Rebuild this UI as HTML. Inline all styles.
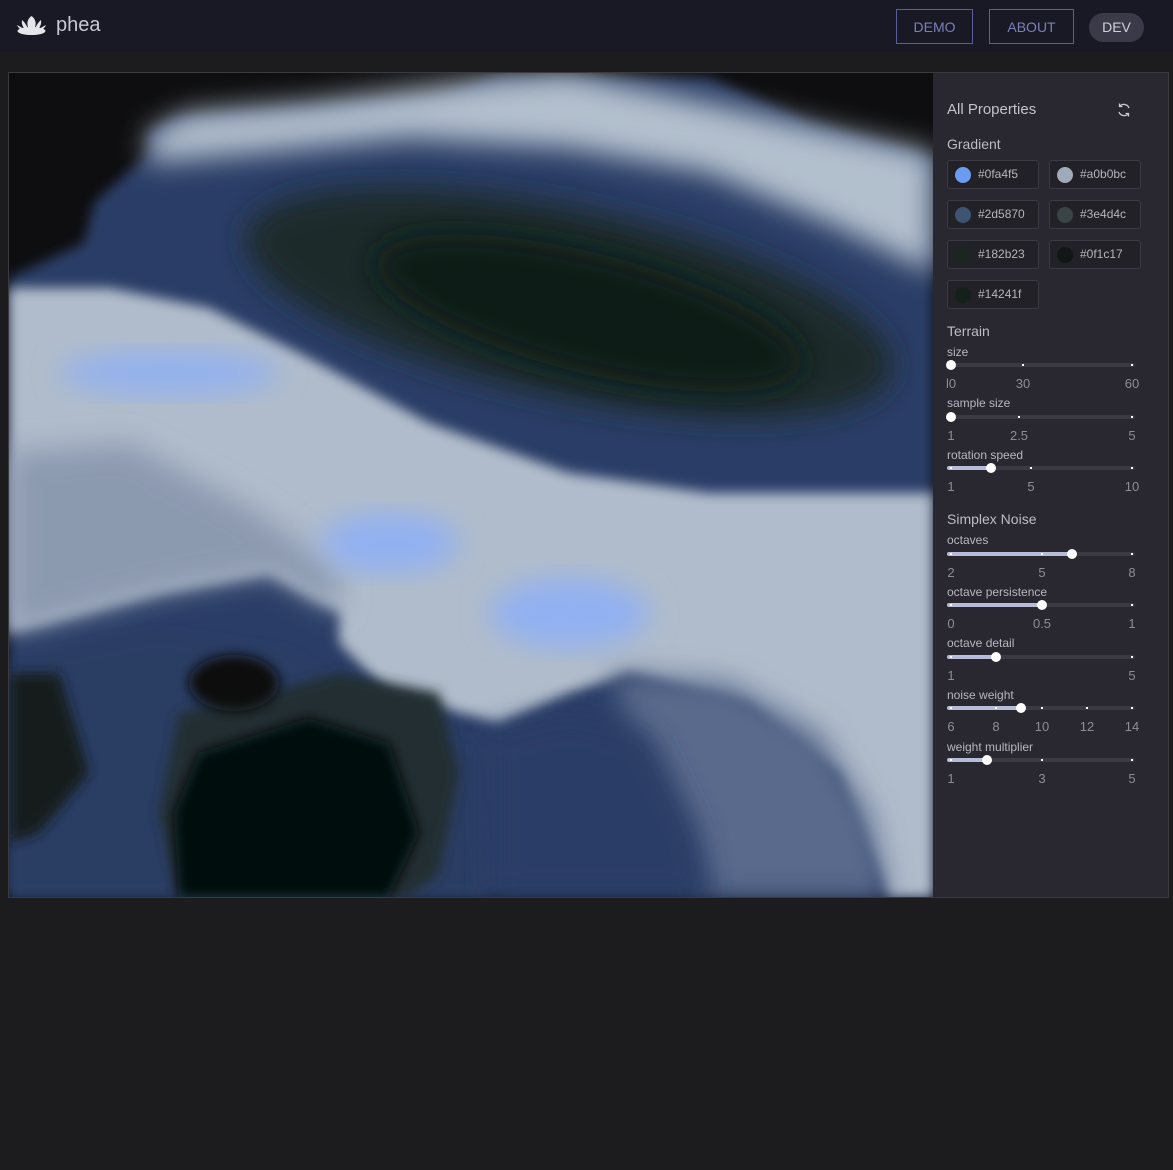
<!DOCTYPE html>
<html><head><meta charset="utf-8"><style>
*{margin:0;padding:0;box-sizing:border-box}
body{width:1173px;height:1170px;background:#1c1b1e;font-family:"Liberation Sans",sans-serif;position:relative;overflow:hidden}
.hdr{position:absolute;left:0;top:0;width:1173px;height:52px;background:#191926}
.logo{position:absolute;left:56px;top:14px;font-size:20px;color:#c8c8d4}
.btn{position:absolute;top:9px;height:35px;border:1px solid #5a5f99;color:#7a80b8;font-size:14px;line-height:35px;text-align:center}
.dev{position:absolute;left:1089px;top:13px;width:55px;height:29px;border-radius:15px;background:#3a3a48;color:#d0d0da;font-size:14px;line-height:29px;text-align:center}
.canvas{position:absolute;left:8px;top:72px;width:1161px;height:826px;border:1px solid #3a3a40;background:#0e0e10}
.panel{position:absolute;left:933px;top:73px;width:235px;height:824px;background:#29272f}
.t{position:absolute;color:#c4c2cc;font-size:15px}
.h{position:absolute;color:#bdbcc6;font-size:14px}
.sw{position:absolute;width:92px;height:29px;border:1px solid #3c3a44;border-radius:3px;background:#222127;color:#b5b4bd;font-size:12px;line-height:27px;padding-left:30px}
.sw i{position:absolute;left:7px;top:6px;width:16px;height:16px;border-radius:50%}
.lb{position:absolute;left:947px;color:#b8b7c0;font-size:12px}
.tr{position:absolute;left:947px;width:188px;height:4px;background:#3b3a42;border-radius:2px}
.fill{position:absolute;left:0;top:0;height:4px;background:#b8bcd8;border-radius:2px}
.tk{position:absolute;top:1px;width:2px;height:2px;background:#fff}
.th{position:absolute;top:-3px;width:10px;height:10px;border-radius:50%;background:#fff;margin-left:-5px}
.nm{position:absolute;color:#8e8d96;font-size:13px;transform:translateX(-50%)}
</style></head><body>
<div class="hdr">
<svg style="position:absolute;left:16px;top:14px" width="31" height="22" viewBox="0 0 31 22"><g fill="#e6e6ea"><ellipse cx="15.5" cy="17" rx="14" ry="4"/><path d="M15.5 2 C10 6 10 13 15.5 18 C21 13 21 6 15.5 2Z"/><path d="M6 6 C5 12 9 17 15 18 C11 14 10 9 6 6Z"/><path d="M25 6 C26 12 22 17 16 18 C20 14 21 9 25 6Z"/><path d="M1 11 C3 16 9 18 14 18 C9 16 5 13 1 11Z"/><path d="M30 11 C28 16 22 18 17 18 C22 16 26 13 30 11Z"/></g></svg>
<div class="logo">phea</div>
<div class="btn" style="left:896px;width:77px">DEMO</div>
<div class="btn" style="left:989px;width:85px">ABOUT</div>
<div class="dev">DEV</div>
</div>
<div class="canvas"></div>
<svg style="position:absolute;left:9px;top:73px" width="924" height="824" viewBox="0 0 924 824">
<defs>
<filter id="b" x="-20%" y="-20%" width="140%" height="140%"><feGaussianBlur stdDeviation="14"/></filter>
<filter id="b2" x="-20%" y="-20%" width="140%" height="140%"><feGaussianBlur stdDeviation="6"/></filter>
<clipPath id="c"><rect width="924" height="824"/></clipPath>
</defs>
<rect width="924" height="824" fill="#0e0e10"/>
<g clip-path="url(#c)">
<path d="M0 205 L75 170 L85 130 L140 80 L140 60 L170 45 L300 35 L430 25 L490 5 L700 5 L800 50 L924 85 L924 824 L0 824Z" fill="#2a3e66" filter="url(#b2)"/>
<path d="M140 60 L180 40 L300 30 L490 5 L560 0 L700 30 L830 60 L924 80 L924 200 L820 150 L700 100 L560 75 L400 65 L250 80 L140 90Z" fill="#b2bfcd" filter="url(#b)"/>
<ellipse cx="560" cy="230" rx="330" ry="95" transform="rotate(12 560 230)" fill="#1d2a2c" filter="url(#b)"/>
<ellipse cx="580" cy="240" rx="220" ry="60" transform="rotate(14 580 240)" fill="#111a17" filter="url(#b)"/>
<path d="M0 215 L100 215 L200 235 L300 285 L420 350 L560 400 L700 420 L924 420 L924 824 L880 824 L830 700 L740 630 L620 600 L560 620 L490 650 L380 620 L330 570 L330 540 L260 500 L150 520 L0 560Z" fill="#b0bccb" filter="url(#b2)"/>
<path d="M0 380 L120 370 L250 440 L330 500 L330 540 L260 500 L150 520 L0 560Z" fill="#8c9ab0" filter="url(#b)"/>
<path d="M600 600 L720 610 L810 660 L860 740 L880 824 L700 824 L640 700Z" fill="#5a6b8c" filter="url(#b)"/>
<ellipse cx="160" cy="300" rx="110" ry="22" fill="#93b1ef" filter="url(#b)"/>
<ellipse cx="380" cy="470" rx="70" ry="30" fill="#92b1f2" filter="url(#b)"/>
<ellipse cx="560" cy="540" rx="80" ry="35" fill="#92b1f2" filter="url(#b)"/>
<path d="M0 590 L150 560 L280 580 L380 650 L460 680 L480 824 L0 824Z" fill="#2a3e64" filter="url(#b2)"/>
<path d="M0 600 L50 600 L80 700 L30 760 L0 770Z" fill="#161f1d" filter="url(#b2)"/>
<path d="M170 640 L260 620 L330 600 L430 620 L450 700 L430 800 L400 824 L170 824 L150 740Z" fill="#222e30" filter="url(#b2)"/>
<path d="M190 680 L300 645 L380 670 L410 760 L380 824 L170 824 L165 740Z" fill="#060b09" filter="url(#b2)"/>
<ellipse cx="225" cy="610" rx="45" ry="28" fill="#0a110f" filter="url(#b2)"/>
<path d="M480 660 L560 640 L640 660 L690 760 L700 824 L480 824Z" fill="#2b3e66" filter="url(#b)"/>
</g>
</svg>
<div class="panel"></div>
<div class="t" style="left:947px;top:101px">All Properties</div>
<svg style="position:absolute;left:1116px;top:102px" width="16" height="16" viewBox="0 0 16 16" fill="none" stroke="#c8c8d0" stroke-width="1.3"><path d="M13 6A5.5 5.5 0 0 0 3.5 4.5M3 10a5.5 5.5 0 0 0 9.5 1.5"/><path d="M3.5 1.5v3h3M12.5 14.5v-3h-3"/></svg>
<div class="h" style="left:947px;top:136px">Gradient</div>
<div class="sw" style="left:947px;top:160px"><i style="background:#6b9cf0"></i>#0fa4f5</div>
<div class="sw" style="left:1049px;top:160px"><i style="background:#a0aab8"></i>#a0b0bc</div>
<div class="sw" style="left:947px;top:200px"><i style="background:#3d5472"></i>#2d5870</div>
<div class="sw" style="left:1049px;top:200px"><i style="background:#3a4444"></i>#3e4d4c</div>
<div class="sw" style="left:947px;top:240px"><i style="background:#1b2521"></i>#182b23</div>
<div class="sw" style="left:1049px;top:240px"><i style="background:#101714"></i>#0f1c17</div>
<div class="sw" style="left:947px;top:280px"><i style="background:#16201b"></i>#14241f</div>
<div class="h" style="left:947px;top:323px">Terrain</div>
<div class="h" style="left:947px;top:511px">Simplex Noise</div>

<div class="lb" style="top:345px">size</div>
<div class="tr" style="top:363px"><i class="tk" style="left:75px"></i><i class="tk" style="left:184px"></i><i class="th" style="left:4px"></i></div>
<div class="nm" style="left:951px;top:376px">l0</div><div class="nm" style="left:1023px;top:376px">30</div><div class="nm" style="left:1132px;top:376px">60</div>

<div class="lb" style="top:396px">sample size</div>
<div class="tr" style="top:415px"><i class="tk" style="left:71px"></i><i class="tk" style="left:184px"></i><i class="th" style="left:4px"></i></div>
<div class="nm" style="left:951px;top:428px">1</div><div class="nm" style="left:1019px;top:428px">2.5</div><div class="nm" style="left:1132px;top:428px">5</div>

<div class="lb" style="top:448px">rotation speed</div>
<div class="tr" style="top:466px"><i class="fill" style="width:44px"></i><i class="tk" style="left:3px"></i><i class="tk" style="left:83px"></i><i class="tk" style="left:184px"></i><i class="th" style="left:44px"></i></div>
<div class="nm" style="left:951px;top:479px">1</div><div class="nm" style="left:1031px;top:479px">5</div><div class="nm" style="left:1132px;top:479px">10</div>

<div class="lb" style="top:533px">octaves</div>
<div class="tr" style="top:552px"><i class="fill" style="width:125px"></i><i class="tk" style="left:3px"></i><i class="tk" style="left:94px"></i><i class="tk" style="left:184px"></i><i class="th" style="left:125px"></i></div>
<div class="nm" style="left:951px;top:565px">2</div><div class="nm" style="left:1042px;top:565px">5</div><div class="nm" style="left:1132px;top:565px">8</div>

<div class="lb" style="top:585px">octave persistence</div>
<div class="tr" style="top:603px"><i class="fill" style="width:95px"></i><i class="tk" style="left:3px"></i><i class="tk" style="left:184px"></i><i class="th" style="left:95px"></i></div>
<div class="nm" style="left:951px;top:616px">0</div><div class="nm" style="left:1042px;top:616px">0.5</div><div class="nm" style="left:1132px;top:616px">1</div>

<div class="lb" style="top:636px">octave detail</div>
<div class="tr" style="top:655px"><i class="fill" style="width:49px"></i><i class="tk" style="left:3px"></i><i class="tk" style="left:184px"></i><i class="th" style="left:49px"></i></div>
<div class="nm" style="left:951px;top:668px">1</div><div class="nm" style="left:1132px;top:668px">5</div>

<div class="lb" style="top:688px">noise weight</div>
<div class="tr" style="top:706px"><i class="fill" style="width:74px"></i><i class="tk" style="left:3px"></i><i class="tk" style="left:48px"></i><i class="tk" style="left:94px"></i><i class="tk" style="left:139px"></i><i class="tk" style="left:184px"></i><i class="th" style="left:74px"></i></div>
<div class="nm" style="left:951px;top:719px">6</div><div class="nm" style="left:996px;top:719px">8</div><div class="nm" style="left:1042px;top:719px">10</div><div class="nm" style="left:1087px;top:719px">12</div><div class="nm" style="left:1132px;top:719px">14</div>

<div class="lb" style="top:740px">weight multiplier</div>
<div class="tr" style="top:758px"><i class="fill" style="width:40px"></i><i class="tk" style="left:3px"></i><i class="tk" style="left:94px"></i><i class="tk" style="left:184px"></i><i class="th" style="left:40px"></i></div>
<div class="nm" style="left:951px;top:771px">1</div><div class="nm" style="left:1042px;top:771px">3</div><div class="nm" style="left:1132px;top:771px">5</div>
</body></html>
